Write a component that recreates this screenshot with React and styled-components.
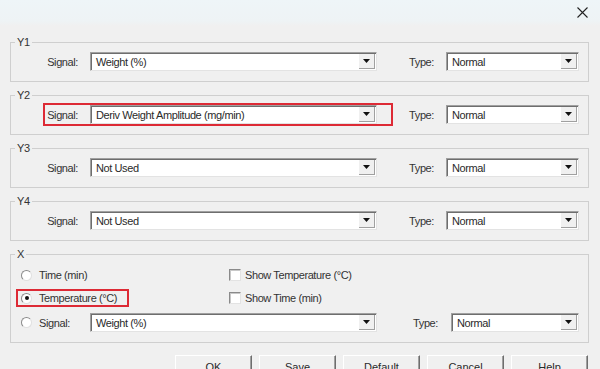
import { createGlobalStyle, styled } from 'styled-components';

const GlobalStyle = createGlobalStyle`
	html, body {
		margin: 0;
		padding: 0;
		background: #f0f0f0;
	}
	body {
		font-family: "Liberation Sans", Arial, sans-serif;
		font-size: 11px;
		letter-spacing: -0.4px;
		color: #333;
	}
`;

const axes = [
	{ name: 'Y1', signal: 'Weight (%)' },
	{ name: 'Y2', signal: 'Deriv Weight Amplitude (mg/min)', marked: true },
	{ name: 'Y3', signal: 'Not Used' },
	{ name: 'Y4', signal: 'Not Used' },
];

const buttons = ['OK', 'Save', 'Default', 'Cancel', 'Help'];

const Combo = ({ value, width }) => (
	<ComboBox $width={width}>
		<ComboText>{value}</ComboText>
		<ComboArrow>
			<svg width="7" height="4" viewBox="0 0 7 4">
				<path d="M0 0H7L3.5 4Z" fill="#111" />
			</svg>
		</ComboArrow>
	</ComboBox>
);

const App = () => {
	return (
		<Window>
			<GlobalStyle />
			<TitleBar>
				<CloseButton>
					<svg width="11" height="11" viewBox="0 0 11 11">
						<path d="M0.5 0.5L10.5 10.5M10.5 0.5L0.5 10.5" stroke="#222" strokeWidth="1.1" />
					</svg>
				</CloseButton>
			</TitleBar>

			<Body>
				{axes.map((axis) => (
					<GroupBox key={axis.name}>
						<Caption>{axis.name}</Caption>
						<Row>
							<SignalCell $marked={axis.marked}>
								<FieldLabel $width={69}>Signal:</FieldLabel>
								<Combo value={axis.signal} width={287} />
							</SignalCell>
							<FieldLabel $width={69}>Type:</FieldLabel>
							<Combo value="Normal" width={133} />
						</Row>
					</GroupBox>
				))}

				<GroupBox>
					<Caption>X</Caption>
					<XGrid>
						<OptionRow>
							<RadioCell>
								<Option>
									<Radio />
									<span>Time (min)</span>
								</Option>
							</RadioCell>
							<Option $gap={4}>
								<Check />
								<span>Show Temperature (°C)</span>
							</Option>
						</OptionRow>
						<OptionRow>
							<RadioCell>
								<Option $marked>
									<Radio $checked />
									<span>Temperature (°C)</span>
								</Option>
							</RadioCell>
							<Option $gap={4}>
								<Check />
								<span>Show Time (min)</span>
							</Option>
						</OptionRow>
						<Row>
							<SignalRadio>
								<Radio />
								<span>Signal:</span>
							</SignalRadio>
							<Combo value="Weight (%)" width={287} />
							<FieldLabel $width={74} $pad={13}>Type:</FieldLabel>
							<Combo value="Normal" width={128} />
						</Row>
					</XGrid>
				</GroupBox>

				<ButtonBar>
					{buttons.map((label) => (
						<PushButton key={label}>{label}</PushButton>
					))}
				</ButtonBar>
			</Body>
		</Window>
	);
};

const Window = styled.div`
	width: 600px;
	height: 369px;
	overflow: hidden;
	display: flex;
	flex-direction: column;
	background: #f0f0f0;
`;

const TitleBar = styled.div`
	height: 26px;
	flex-shrink: 0;
	display: flex;
	align-items: center;
	justify-content: flex-end;
	padding-right: 11px;
	background: linear-gradient(#eef5f8, #eef3f5 80%, #f0f0f0);
`;

const CloseButton = styled.div`
	display: flex;
	align-items: center;
	justify-content: center;
	width: 14px;
	height: 14px;
	margin-top: -2px;
`;

const Body = styled.div`
	display: flex;
	flex-direction: column;
	gap: 7px;
	padding: 10px 11px 0 10px;
`;

const GroupBox = styled.fieldset`
	margin: 0;
	padding: 4px 8px 10px 10px;
	border: 1px solid #cfcfcf;
	min-width: 0;
`;

const Caption = styled.legend`
	margin-left: -6px;
	padding: 0 2px;
	font-size: 11px;
	line-height: 12px;
	color: #333;
`;

const Row = styled.div`
	display: flex;
	align-items: center;
	height: 19px;
`;

const SignalCell = styled.div`
	display: flex;
	align-items: center;
	position: relative;

	${(p) => p.$marked && `
		&::after {
			content: '';
			position: absolute;
			left: 22px;
			right: -16px;
			top: -2px;
			bottom: -2px;
			border: 2px solid #dd2a35;
			pointer-events: none;
		}
	`}
`;

const FieldLabel = styled.span`
	width: ${(p) => p.$width}px;
	padding-right: ${(p) => p.$pad || 12}px;
	box-sizing: border-box;
	text-align: right;
	white-space: nowrap;
`;

const ComboBox = styled.div`
	width: ${(p) => p.$width}px;
	height: 19px;
	box-sizing: border-box;
	display: flex;
	align-items: stretch;
	background: #fff;
	border-top: 1px solid #a0a0a0;
	border-left: 1px solid #a0a0a0;
	border-right: 1px solid #e3e3e3;
	border-bottom: 1px solid #e3e3e3;
	box-shadow: inset 1px 1px 0 #6e6e6e;
`;

const ComboText = styled.span`
	flex: 1;
	display: flex;
	align-items: center;
	padding-left: 5px;
	color: #2a2a2a;
	white-space: nowrap;
	overflow: hidden;
`;

const ComboArrow = styled.span`
	width: 15px;
	margin: 1px 1px 1px 0;
	display: flex;
	align-items: center;
	justify-content: center;
	background: #f0f0f0;
	border-right: 1px solid #a0a0a0;
	border-bottom: 1px solid #a0a0a0;
`;

const XGrid = styled.div`
	display: grid;
	row-gap: 7px;
	padding-top: 3px;
`;

const OptionRow = styled.div`
	display: flex;
	align-items: center;
	height: 16px;
`;

const RadioCell = styled.div`
	width: 208px;
	display: flex;
	align-items: center;
`;

const Option = styled.label`
	display: flex;
	align-items: center;
	gap: ${(p) => p.$gap || 7}px;
	position: relative;
	white-space: nowrap;

	${(p) => p.$marked && `
		&::after {
			content: '';
			position: absolute;
			left: -5px;
			right: -12px;
			top: -3px;
			bottom: -3px;
			border: 2px solid #dd2a35;
			pointer-events: none;
		}
	`}
`;

const SignalRadio = styled(Option)`
	width: 69px;
`;

const Radio = styled.span`
	width: 11px;
	height: 11px;
	box-sizing: border-box;
	flex-shrink: 0;
	border-radius: 50%;
	background: #fff;
	border: 1px solid;
	border-color: #8a8a8a #e0e0e0 #e0e0e0 #8a8a8a;
	display: flex;
	align-items: center;
	justify-content: center;

	&::after {
		content: '';
		width: 4px;
		height: 4px;
		border-radius: 50%;
		background: ${(p) => (p.$checked ? '#111' : 'transparent')};
	}
`;

const Check = styled.span`
	width: 12px;
	height: 12px;
	box-sizing: border-box;
	flex-shrink: 0;
	background: #fff;
	border: 1px solid;
	border-color: #8a8a8a #e3e3e3 #e3e3e3 #8a8a8a;
	box-shadow: inset 1px 1px 0 #c8c8c8;
`;

const ButtonBar = styled.div`
	display: flex;
	justify-content: flex-end;
	gap: 7px;
	margin-top: 5px;
	padding-right: 1px;
`;

const PushButton = styled.button`
	width: 77px;
	height: 23px;
	padding: 0;
	font: inherit;
	color: #2a2a2a;
	background: #f0f0f0;
	border: 1px solid;
	border-color: #fff #6e6e6e #6e6e6e #fff;
	box-shadow: inset -1px -1px 0 #a0a0a0;
`;

export default App;
